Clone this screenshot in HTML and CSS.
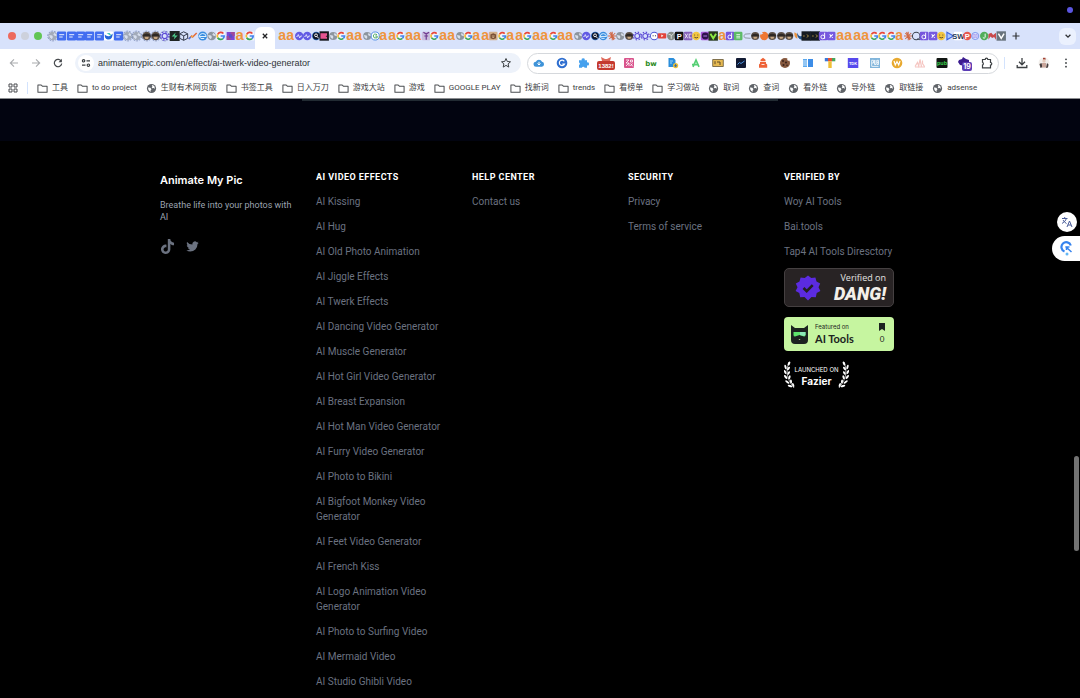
FILE: index.html
```html
<!DOCTYPE html>
<html lang="en">
<head>
<meta charset="utf-8">
<title>Animate My Pic</title>
<link rel="stylesheet" href="styles.css">
</head>
<body>
<svg class="sprite" aria-hidden="true">
  <symbol id="folder" viewBox="0 0 12 12"><path d="M1 2.200h3.600l1.200 1.300H11v6.600H1z" fill="none" stroke="#4a4d50" stroke-width="1.100" stroke-linejoin="round"/></symbol>
  <symbol id="globe" viewBox="0 0 12 12"><circle cx="6" cy="6" r="5" fill="#5f6368"/><path d="M2.200 5l2.600.3 1.200 1.500-1 1 .3 1.800Q2.500 9 2.200 5zM6.200 2.200l1 1.200-1 1.100.9 1.200 1.500-.2 1.100 1Q10 3.500 7.500 2.200z" fill="#fff"/></symbol>
  <symbol id="laurel" viewBox="0 0 11 28"><path d="M5 1Q-1 14 10 27" fill="none" stroke="#eee" stroke-width=".7"/><g fill="#fff"><ellipse cx="5" cy="2.500" rx="1.100" ry="2.100" transform="rotate(25 5 2.500)"/><ellipse cx="1.500" cy="6" rx="1" ry="2.200" transform="rotate(-15 1.500 6)"/><ellipse cx="4.500" cy="7.500" rx="1" ry="2" transform="rotate(40 4.500 7.500)"/><ellipse cx="1.200" cy="11" rx="1" ry="2.200" transform="rotate(-25 1.200 11)"/><ellipse cx="4.700" cy="12" rx="1" ry="2" transform="rotate(30 4.700 12)"/><ellipse cx="1.700" cy="16" rx="1" ry="2.300" transform="rotate(-40 1.700 16)"/><ellipse cx="5.500" cy="16.300" rx="1" ry="2" transform="rotate(15 5.500 16.300)"/><ellipse cx="3.300" cy="21" rx="1" ry="2.400" transform="rotate(-55 3.300 21)"/><ellipse cx="7" cy="20.500" rx="1" ry="2" transform="rotate(-5 7 20.500)"/><ellipse cx="6" cy="25" rx="1" ry="2.400" transform="rotate(-70 6 25)"/><ellipse cx="9.200" cy="24" rx="1" ry="2" transform="rotate(-20 9.200 24)"/></g></symbol>
</svg>
<div class="browser">
  <div class="menubar"><span class="dot"></span></div>
  <div class="tabstrip">
    <div class="lights"><i class="red"></i><i class="grey"></i><i class="green"></i></div>
    <div class="tabs tabs-left" data-tabs="globering doc doc doc doc doc bird doc globering globering monkeyring monkeyring flowerring bolt cube chart edge globe google grid amazon google"></div>
    <div class="tab-active"><button class="plain" aria-label="Close tab"><svg width="8" height="8" viewBox="0 0 8 8"><path d="M1.800 1.800l4.400 4.400M6.200 1.800L1.800 6.200" stroke="#202124" stroke-width="1.300"/></svg></button></div>
    <div class="tabs tabs-right" data-tabs="amazon amazon pulse pulse search pink globe google amazon amazon globe gring amazon amazon google amazon amazon shirt google amazon amazon globe google amazon amazon brown google amazon amazon google amazon amazon google amazon amazon globe pulse search edge burst globe monkey flower flower face tube leaf pmark xc smile dash vee amazon dee sheet cee monkey orange monkey monkey monkey swoosh dark dark dee ex amazon amazon amazon amazon google google google amazon burst oring dee ex smile play sw pred net jay em vgrey"></div>
    <button class="plain newtab" aria-label="New tab"><svg width="10" height="10" viewBox="0 0 10 10"><path d="M5 1.500v7M1.500 5h7" stroke="#303236" stroke-width="1.200"/></svg></button>
    <button class="plain tabsearch" aria-label="Search tabs"><svg width="8" height="8" viewBox="0 0 8 8"><path d="M1.600 2.800L4 5.200l2.400-2.400" fill="none" stroke="#303236" stroke-width="1.300"/></svg></button>
  </div>
  <div class="toolbar">
    <div class="nav">
      <button class="plain" aria-label="Back"><svg width="12" height="12" viewBox="0 0 12 12"><path d="M10 6H2.500M6 2.300L2.300 6 6 9.700" fill="none" stroke="#a9abae" stroke-width="1.100"/></svg></button>
      <button class="plain" aria-label="Forward"><svg width="12" height="12" viewBox="0 0 12 12"><path d="M2 6h7.500M6 2.300L9.700 6 6 9.700" fill="none" stroke="#a9abae" stroke-width="1.100"/></svg></button>
      <button class="plain" aria-label="Reload"><svg width="12" height="12" viewBox="0 0 12 12"><path d="M9.300 4.300A3.700 3.700 0 1 0 9.700 6.500" fill="none" stroke="#46494d" stroke-width="1.200"/><path d="M9.900 1.800v3.400H6.500z" fill="#46494d"/></svg></button>
    </div>
    <div class="omnibox">
      <button class="plain site" aria-label="Site information"><svg width="10" height="10" viewBox="0 0 10 10"><g fill="none" stroke="#3c4043" stroke-width="1.200"><circle cx="2.600" cy="2.800" r="1.200"/><path d="M5.500 2.800H9M1 7.200h3.500"/><circle cx="7.400" cy="7.200" r="1.200"/></g></svg></button>
      <input class="url" type="text" aria-label="Address" value="animatemypic.com/en/effect/ai-twerk-video-generator">
      <button class="plain" aria-label="Bookmark this page"><svg width="12" height="12" viewBox="0 0 12 12"><path d="M6 1.500l1.300 3 3.200.3-2.400 2.100.7 3.200L6 8.400l-2.800 1.700.7-3.200L1.500 4.800l3.200-.3z" fill="none" stroke="#3c4043" stroke-width="1"/></svg></button>
    </div>
    <div class="extensions">
      <svg viewBox="0 0 12 12"><path d="M3.200 9.800a2.500 2.500 0 0 1-.3-5A3.300 3.300 0 0 1 9 4.700a2.600 2.600 0 0 1-.1 5.100z" fill="#3f93d8"/><path d="M6 4.800v3M4.500 6.500L6 8l1.500-1.500" fill="none" stroke="#fff"/></svg>
      <svg viewBox="0 0 12 12"><circle cx="6" cy="6" r="5.300" fill="#2f6fd0"/><path d="M8.300 4.300A2.700 2.700 0 1 0 8.500 7H6.300" fill="none" stroke="#fff" stroke-width="1.200"/></svg>
      <svg viewBox="0 0 12 12"><path d="M1 3.200h2.800a1.500 1.500 0 1 1 2.800 0H9v2.300a1.500 1.500 0 1 1 0 2.800v2.500H6.600a1.400 1.400 0 0 0-2.700 0H1V8a1.400 1.400 0 0 0 0-2.600z" fill="#46a1ee"/></svg>
      <svg class="wide" viewBox="0 0 18 16"><path d="M4 2l4 2 2 0 4-2-1 4H5z" fill="#de6a5c"/><rect x="0" y="6" width="18" height="9" rx="2" fill="#c4392f"/><text x="9" y="13" text-anchor="middle" class="mini" fill="#fff">1382!</text></svg>
      <svg viewBox="0 0 12 12"><rect x="1" y="1" width="10" height="10" rx="1" fill="#d9548c"/><path d="M3 3h3L3 6h3M3 9l3-3v3M7.500 3h2v2h-2zM7.500 6.500l2.500 3M9.500 6.500L7.300 9" fill="none" stroke="#fff" stroke-width=".8"/></svg>
      <svg viewBox="0 0 12 12"><text x="6" y="8.500" text-anchor="middle" class="bw" fill="#2c8a22">bw</text></svg>
      <svg viewBox="0 0 12 12"><path d="M1.500 1h5l2 2v7h-7z" fill="#2b8edb"/><path d="M3 4h3M3 6h2" stroke="#9fd2f5"/><circle cx="8.600" cy="8.600" r="2.600" fill="#edbf39"/><path d="M8.600 7v3M7.200 8.800h2.800" stroke="#3670a7"/></svg>
      <svg viewBox="0 0 12 12"><path d="M3 9.800L6 3l3 6.800M2 7.700h5.500" fill="none" stroke="#55cf74" stroke-width="1.700"/></svg>
      <svg viewBox="0 0 12 12"><path d="M.7 2.500h10.600v7H.7z" fill="#e5b951" stroke="#635536" stroke-width=".8"/><path d="M3 4.200v3M5 5h3v3" fill="none" stroke="#5c4926"/></svg>
      <svg viewBox="0 0 12 12"><rect x="1" y="1" width="10" height="10" rx="1" fill="#111a33"/><path d="M2.500 7.500l2-2 1.500 1L9.500 4" fill="none" stroke="#4c95e0"/></svg>
      <svg viewBox="0 0 12 12"><path d="M6 .8l2.500 2v1.500H3.500V2.800zM3 5h6v1.500l1.200 1v3.300H2V7.500l1-1z" fill="#ee6237"/><path d="M4.500 7.500h3" stroke="#fff" stroke-width=".8"/></svg>
      <svg viewBox="0 0 12 12"><circle cx="6" cy="6" r="5" fill="#85583e"/><g fill="#3a221a"><circle cx="4" cy="4" r="1"/><circle cx="7" cy="5.500" r="1"/><circle cx="4.500" cy="8" r="1"/><circle cx="8" cy="8.300" r=".8"/></g><circle cx="9.500" cy="2.500" r="1.200" fill="#fff"/></svg>
      <svg viewBox="0 0 12 12"><path d="M1 2h4v8H1z" fill="#5ba9ee"/><path d="M1 4h4M1 6h4M1 8h4" stroke="#fff" stroke-width=".7"/><path d="M6 2h5v8H6z" fill="#3c8de7"/></svg>
      <svg viewBox="0 0 12 12"><path d="M.8 1h3.600v3.300H.8z" fill="#3c78d8"/><path d="M4 1h4v3.300H4z" fill="#e55337"/><path d="M8 1h3.300v3.300H8z" fill="#48a65a"/><path d="M4.300 4.300h3.400V11H4.300z" fill="#f0bf35"/></svg>
      <svg viewBox="0 0 12 12"><rect x=".8" y="1" width="10.500" height="10" fill="#5749ed"/><text x="6" y="7.800" text-anchor="middle" class="tdk" fill="#fff">TDK</text></svg>
      <svg viewBox="0 0 12 12"><rect x="1" y="1" width="10" height="10" fill="#81b5db"/><path d="M2.700 9V3.300h1.800V6H2.700M5.500 3v4.500h1.500V3M8 3.300h1.500v4.200H8zM8 5.400h1.500M2.500 9.400h7" fill="none" stroke="#fff" stroke-width=".8"/></svg>
      <svg viewBox="0 0 12 12"><circle cx="6" cy="6" r="5.300" fill="#e8a92f"/><path d="M3 4l1.300 4L6 4.500 7.700 8 9 4" fill="none" stroke="#fff" stroke-width="1.200"/></svg>
      <svg viewBox="0 0 12 12"><path d="M1 9.500l2.500-4 1.200 3.500L6 2.500l1.500 7M8.500 3.500v3l2 3M1 10h10" fill="none" stroke="#f5c6c2" stroke-width="1.200"/></svg>
      <svg viewBox="0 0 12 12"><rect x=".5" y="1" width="11" height="10" rx="1" fill="#101512"/><text x="6" y="8" text-anchor="middle" class="pub" fill="#35c447">pub</text></svg>
      <svg class="wide" viewBox="0 0 18 16"><path d="M4 5l3-1 1-2 3 2 3 1v4l-4 2-5-1-2-3z" fill="#3b1b8f"/><rect x="7" y="7" width="10" height="9" rx="2" fill="#5b3db5"/><text x="12" y="14" text-anchor="middle" class="count" fill="#fff">19</text></svg>
      <svg viewBox="0 0 12 12"><path d="M1.500 2.500h2.700a1.300 1.300 0 0 1 2.600 0h2.700v3a1.300 1.300 0 0 1 0 2.600v2.700h-8V8a1.500 1.500 0 0 0 0-2.700z" fill="none" stroke="#3c4043" stroke-width="1.200"/></svg>
    </div>
    <div class="actions">
      <button class="plain" aria-label="Downloads"><svg width="12" height="12" viewBox="0 0 12 12"><path d="M6 1v6.500M3 4.800l3 3 3-3M1.200 8v2.500h9.600V8" fill="none" stroke="#3c4043" stroke-width="1.300"/></svg></button>
      <button class="plain" aria-label="Profile"><svg width="12" height="12" viewBox="0 0 12 12"><circle cx="6" cy="6" r="5.500" fill="#f3efec"/><path d="M5 .8h2.500v2H5z" fill="#a24235"/><circle cx="6" cy="4" r="1.700" fill="#e5c8ba"/><path d="M1.500 7l2-1 1 4-2 1zM9 6l1.500 1.500-.5 3-2 .5z" fill="#463c3c"/><path d="M4 6h4v4.500H4z" fill="#c9a59a"/></svg></button>
      <button class="plain" aria-label="Menu"><svg width="12" height="12" viewBox="0 0 12 12"><g fill="#3c4043"><circle cx="6" cy="2.300" r=".9"/><circle cx="6" cy="6" r=".9"/><circle cx="6" cy="9.700" r=".9"/></g></svg></button>
    </div>
  </div>
  <div class="bookmarks">
    <svg class="apps" viewBox="0 0 10 10"><path d="M1 1h3v3H1zM6 1h3v3H6zM1 6h3v3H1zM6 6h3v3H6z" fill="none" stroke="#4a4d50"/></svg>
    <nav>
      <a href="#"><svg><use href="#folder"/></svg>工具</a>
      <a href="#"><svg><use href="#folder"/></svg>to do project</a>
      <a href="#"><svg><use href="#globe"/></svg>生财有术网页版</a>
      <a href="#"><svg><use href="#folder"/></svg>书签工具</a>
      <a href="#"><svg><use href="#folder"/></svg>日入万刀</a>
      <a href="#"><svg><use href="#folder"/></svg>游戏大站</a>
      <a href="#"><svg><use href="#folder"/></svg>游戏</a>
      <a href="#"><svg><use href="#folder"/></svg>GOOGLE PLAY</a>
      <a href="#"><svg><use href="#folder"/></svg>找新词</a>
      <a href="#"><svg><use href="#folder"/></svg>trends</a>
      <a href="#"><svg><use href="#folder"/></svg>看榜单</a>
      <a href="#"><svg><use href="#folder"/></svg>学习做站</a>
      <a href="#"><svg><use href="#globe"/></svg>取词</a>
      <a href="#"><svg><use href="#globe"/></svg>查词</a>
      <a href="#"><svg><use href="#globe"/></svg>看外链</a>
      <a href="#"><svg><use href="#globe"/></svg>导外链</a>
      <a href="#"><svg><use href="#globe"/></svg>取链接</a>
      <a href="#"><svg><use href="#globe"/></svg>adsense</a>
    </nav>
  </div>
  <div class="page">
    <div class="band"><div class="card-edge"></div></div>
    <footer class="footer">
      <section>
        <h2>Animate My Pic</h2>
        <p class="tagline">Breathe life into your photos with AI</p>
        <div class="social">
          <a href="#" aria-label="TikTok"><svg width="15" height="15" viewBox="0 0 24 24"><path fill="#6b7280" d="M12.530.02C13.840 0 15.140.01 16.440 0c.08 1.530.63 3.090 1.750 4.170 1.120 1.110 2.700 1.620 4.240 1.790v4.030c-1.440-.05-2.890-.35-4.200-.97-.57-.26-1.100-.59-1.620-.93-.01 2.920.01 5.840-.02 8.750-.08 1.400-.54 2.790-1.350 3.940-1.310 1.920-3.580 3.170-5.910 3.210-1.430.08-2.860-.31-4.080-1.030-2.020-1.190-3.440-3.370-3.650-5.710-.02-.5-.03-1-.01-1.490.18-1.900 1.120-3.720 2.580-4.960 1.660-1.440 3.980-2.130 6.150-1.720.02 1.480-.04 2.960-.04 4.440-.99-.32-2.150-.23-3.020.37-.63.41-1.110 1.040-1.360 1.750-.21.51-.15 1.070-.14 1.610.24 1.640 1.820 3.020 3.500 2.870 1.120-.01 2.190-.66 2.770-1.610.19-.33.4-.67.41-1.060.1-1.790.06-3.570.07-5.360.01-4.030-.01-8.050.02-12.070z"/></svg></a>
          <a href="#" aria-label="Twitter"><svg width="15" height="15" viewBox="0 0 24 24"><path fill="#6b7280" d="M22 5.800a8.500 8.500 0 0 1-2.360.64 4.130 4.130 0 0 0 1.810-2.270 8.210 8.210 0 0 1-2.610 1 4.100 4.100 0 0 0-7 3.740 11.640 11.640 0 0 1-8.450-4.290 4.160 4.160 0 0 0-.55 2.070 4.090 4.090 0 0 0 1.820 3.410 4.050 4.050 0 0 1-1.860-.51v.05a4.100 4.100 0 0 0 3.300 4 3.930 3.930 0 0 1-1.100.17 4.900 4.900 0 0 1-.77-.07 4.110 4.110 0 0 0 3.830 2.840A8.220 8.220 0 0 1 3 18.340a7.930 7.930 0 0 1-1-.06 11.570 11.570 0 0 0 6.290 1.850A11.590 11.590 0 0 0 20 8.450v-.53a8.430 8.430 0 0 0 2-2.120z"/></svg></a>
        </div>
      </section>
      <section>
        <h3>AI Video Effects</h3>
        <ul>
          <li><a href="#">AI Kissing</a></li>
          <li><a href="#">AI Hug</a></li>
          <li><a href="#">AI Old Photo Animation</a></li>
          <li><a href="#">AI Jiggle Effects</a></li>
          <li><a href="#">AI Twerk Effects</a></li>
          <li><a href="#">AI Dancing Video Generator</a></li>
          <li><a href="#">AI Muscle Generator</a></li>
          <li><a href="#">AI Hot Girl Video Generator</a></li>
          <li><a href="#">AI Breast Expansion</a></li>
          <li><a href="#">AI Hot Man Video Generator</a></li>
          <li><a href="#">AI Furry Video Generator</a></li>
          <li><a href="#">AI Photo to Bikini</a></li>
          <li><a href="#">AI Bigfoot Monkey Video Generator</a></li>
          <li><a href="#">AI Feet Video Generator</a></li>
          <li><a href="#">AI French Kiss</a></li>
          <li><a href="#">AI Logo Animation Video Generator</a></li>
          <li><a href="#">AI Photo to Surfing Video</a></li>
          <li><a href="#">AI Mermaid Video</a></li>
          <li><a href="#">AI Studio Ghibli Video</a></li>
        </ul>
      </section>
      <section>
        <h3>Help Center</h3>
        <ul><li><a href="#">Contact us</a></li></ul>
      </section>
      <section>
        <h3>Security</h3>
        <ul>
          <li><a href="#">Privacy</a></li>
          <li><a href="#">Terms of service</a></li>
        </ul>
      </section>
      <section>
        <h3>Verified By</h3>
        <ul>
          <li><a href="#">Woy AI Tools</a></li>
          <li><a href="#">Bai.tools</a></li>
          <li><a href="#">Tap4 AI Tools Diresctory</a></li>
        </ul>
        <div class="badges">
          <a class="badge dang" href="#">
            <svg width="26" height="26" viewBox="0 0 26 26"><path d="M13 .5l3.300 2.600 4.100-.7 1.100 4 3.700 2-1.700 3.900 1.900 3.800-3.700 2-.9 4.200-4.300-.3L13 25.500l-3.500-3.500-4.300.3-.9-4.200-3.700-2 1.900-3.800L.8 8.400l3.700-2 1.100-4 4.100.7z" fill="#5b2be0"/><path d="M8.500 13l3.200 3.200 6-6" fill="none" stroke="#231f20" stroke-width="2.600"/></svg>
            <span class="dang-text"><span>Verified on</span><strong>DANG!</strong></span>
          </a>
          <a class="badge tools" href="#">
            <svg width="17" height="19" viewBox="0 0 17 19"><path d="M0 0l4 3h9l4-3v15q0 4-4 4H4q-4 0-4-4z" fill="#1c2320"/><path d="M2.500 7h12v3q0 1.500-1.500 1.500L8.500 10 4 11.500q-1.500 0-1.500-1.500z" fill="#5ee66c"/><path d="M9 7h5.500v3L13 11 9 10z" fill="#8ceab8"/><path d="M7.500 14h2l-1 1z" fill="#c6f5a0"/></svg>
            <span class="tools-text"><small>Featured on</small><strong>AI Tools</strong></span>
            <span class="votes"><svg width="6" height="8" viewBox="0 0 6 8"><path d="M0 0h6v8L3 6 0 8z" fill="#1c2320"/></svg><span>0</span></span>
          </a>
          <a class="badge fazier" href="#">
            <svg width="11" height="28"><use href="#laurel"/></svg>
            <span class="fazier-text"><small>LAUNCHED ON</small><strong>Fazier</strong></span>
            <svg class="mirror" width="11" height="28"><use href="#laurel"/></svg>
          </a>
        </div>
      </section>
    </footer>
    <div class="floating">
      <button class="plain translate" aria-label="Translate"><svg width="12" height="12" viewBox="0 0 12 12"><g fill="none" stroke="#4a5d99" stroke-width="1"><path d="M1 2.500h5.500M3.700 1v1.500M5.500 2.500Q4.500 5.500 1 7.500M2 4q1.500 2.500 3.500 3.500"/><path d="M6 11l2.500-6L11 11M7 9h3"/></g></svg></button>
      <button class="plain assistant" aria-label="Assistant"><svg width="13" height="15" viewBox="0 0 13 15"><path d="M10.800 4.500A4.800 4.800 0 1 0 4.500 10.500" fill="none" stroke="#3583ee" stroke-width="2.200"/><path d="M5.500 5.500l6 5.500M6.500 9V6h3" fill="none" stroke="#3583ee" stroke-width="1.500"/><circle cx="7" cy="13" r="1.500" fill="#63b7f5"/></svg></button>
    </div>
    <div class="scroll-thumb"></div>
  </div>
</div>
<script src="tabs.js"></script>
</body>
</html>
```
FILE: styles.css
```css
* { box-sizing: border-box; }
body { margin: 0; background: #000; font-family: Roboto, "Noto Sans CJK SC", sans-serif; font-size: 10px; line-height: 15px; }
a { color: inherit; text-decoration: none; }
h2, h3, p, ul { margin: 0; padding: 0; }
ul { list-style: none; }
svg { display: block; flex: none; }
.sprite { position: absolute; width: 0; height: 0; }
.plain { display: flex; align-items: center; justify-content: center; padding: 0; border: 0; background: none; }
.browser { display: flex; flex-direction: column; height: 100vh; overflow: hidden; }

.menubar { display: flex; justify-content: flex-end; flex: none; height: 23px; padding: 7px 7px 0 0; }
.dot { width: 6px; height: 6px; border-radius: 50%; background: #5b55e0; }

.tabstrip { display: flex; flex: none; height: 26px; align-items: center; padding: 0 4px 0 8px; background: #d8e2fb; }
.lights { display: flex; gap: 5px; width: 40px; flex: none; }
.lights i { width: 8px; height: 8px; border-radius: 50%; }
.lights .red { background: #ed6a5e; }
.lights .grey { background: #cdd1dc; }
.lights .green { background: #61c554; }
.tabs { display: flex; min-width: 0; }
.tabs svg { flex: 1; min-width: 0; height: 10px; overflow: visible; }
.tabs-left { flex: 206; }
.tabs-right { flex: 727; }
.tab-active { align-self: flex-end; flex: none; width: 20px; height: 22px; margin: 0 3px 0 1px; padding-bottom: 4px; display: flex; align-items: center; justify-content: center; border-radius: 6px 6px 0 0; background: #fff; }
.newtab { width: 12px; margin-left: 5px; flex: none; }
.tabsearch { width: 17px; height: 17px; margin-left: 37px; border-radius: 6px; background: #ebf1fe; flex: none; }

.toolbar { display: flex; flex: none; height: 28px; align-items: center; padding: 0 8px; background: #fff; }
.nav { display: flex; gap: 10px; width: 67px; flex: none; }
.omnibox { display: flex; align-items: center; flex: 434; height: 20px; padding: 0 9px 0 3px; border-radius: 10px; background: #edf2fa; }
.site { width: 16px; height: 16px; border-radius: 50%; background: #fff; }
.url { flex: 1; min-width: 0; margin-left: 4px; padding: 0; border: 0; outline: 0; background: none; color: #2f3236; font: 9px/14px "Liberation Sans", sans-serif; }
.extensions { display: grid; grid-template-columns: repeat(21, 1fr); flex: 470; height: 21px; margin-left: 6px; align-items: center; justify-items: center; border: 1px solid #d5d8dc; border-radius: 11px; }
.extensions svg { width: 12px; height: 12px; }
.extensions .wide { width: 18px; height: 16px; }
.mini { font: bold 6px "Liberation Sans", sans-serif; }
.tdk { font: bold 4px "Liberation Sans", sans-serif; }
.bw { font: bold 7px "DejaVu Sans", sans-serif; }
.pub { font: bold 6px Roboto, sans-serif; }
.count { font: bold 7px Inter, sans-serif; }
.actions { display: flex; gap: 10px; flex: none; margin-left: 5px; padding-left: 11px; border-left: 1px solid #d3e3fd; }

.bookmarks { display: flex; flex: none; height: 22px; align-items: center; padding: 1px 0 0 8px; border-bottom: 1px solid #8b8d90; background: #fff; color: #3c4043; font-size: 8px; line-height: 12px; }
.apps { width: 10px; height: 10px; }
.bookmarks nav { display: flex; gap: 9px; margin-left: 9px; padding-left: 9px; border-left: 1px solid #d3e3fd; white-space: nowrap; }
.bookmarks a { display: flex; gap: 4px; align-items: center; }
.bookmarks a svg { width: 11px; height: 11px; }

.page { flex: 1; min-height: 0; overflow: hidden; background: #000; }
.band { height: 42px; background: #020410; }
.card-edge { width: 44%; height: 2px; margin: 0 auto; background: #222b33; }
.footer { display: grid; grid-template-columns: repeat(5, 1fr); gap: 20px; max-width: 760px; margin: 0 auto; padding-top: 29px; color: #6b7280; }
h2 { color: #fff; font: 600 11px/20px Inter, sans-serif; }
.tagline { margin-top: 9px; color: #9ca3af; font-size: 9px; line-height: 12px; }
.social { display: flex; gap: 10px; margin-top: 16px; }
h3 { margin-bottom: 9px; color: #fff; font-size: 9px; font-weight: 700; line-height: 15px; letter-spacing: .05em; text-transform: uppercase; }
.footer ul { display: grid; gap: 10px; }
.badges { display: flex; flex-direction: column; align-items: flex-start; gap: 10px; margin-top: 9px; }
.badge { display: flex; align-items: center; }
.dang { width: 110px; height: 39px; padding: 0 7px 0 10px; justify-content: space-between; border: 1px solid #454041; border-radius: 5px; background: #282324; color: #e5e3e3; }
.dang-text { display: flex; flex-direction: column; align-items: flex-end; font: 9px/12px "Open Sans", sans-serif; }
.dang-text strong { color: #f3efe9; font: italic 900 18px/20px Roboto, sans-serif; }
.tools { width: 110px; height: 34px; padding: 0 9px 0 7px; gap: 7px; border-radius: 4px; background: #c6f5a0; color: #1c2320; }
.tools-text { display: flex; flex-direction: column; flex: 1; }
.tools-text small { font: 6px/8px Inter, sans-serif; }
.tools-text strong { font: bold 11px/15px Lato, sans-serif; }
.votes { display: flex; flex-direction: column; align-items: center; gap: 2px; font: 8px/12px Lato, sans-serif; }
.fazier { width: 65px; height: 28px; justify-content: space-between; color: #fff; }
.fazier-text { display: flex; flex-direction: column; align-items: center; width: 43px; padding-top: 3px; white-space: nowrap; }
.fazier-text small { font: 6px/8px Inter, sans-serif; }
.fazier-text strong { font: bold 10px/14px Inter, sans-serif; }
.mirror { transform: scaleX(-1); }

.floating { position: fixed; right: 0; top: 212px; display: flex; flex-direction: column; align-items: flex-end; gap: 4px; }
.translate { width: 20px; height: 20px; margin-right: 3px; border-radius: 50%; background: #fff; }
.assistant { width: 28px; height: 25px; border-radius: 13px 0 0 13px; background: #fff; }
.scroll-thumb { position: fixed; right: 1px; top: 456px; width: 5px; height: 95px; border-radius: 3px; background: #737373; }
.fav-letter { font: bold 15px "Liberation Sans", sans-serif; text-anchor: middle; }
.fav-small { font: bold 8px "Liberation Sans", sans-serif; text-anchor: middle; }
```
FILE: tabs.js
```js
// Favicon drawings on a 10 x 10 grid, keyed by the names used in data-tabs.
const ring = '<circle cx="5" cy="5" r="4.900" fill="none" stroke="#5a6da0" stroke-width=".6" stroke-dasharray="2 1"/>';
const globe = '<circle cx="5" cy="5" r="4.300" fill="#8d959f"/><path d="M1.500 4l3 .5.700 1.500-1 2.300-2-1.800zM5.500 1.300l1 1.500-1 1 1.500 1 2 .4-.5-2z" fill="#d8dfeb"/>';
const monkey = '<circle cx="5" cy="5" r="4.300" fill="#5d5148"/><path d="M1 4q4-3 8 0v1.500H1z" fill="#2e2825"/><path d="M2.800 5.800h4.400L6.300 8H3.700z" fill="#c9a883"/>';
const flower = '<g fill="none" stroke="#5c4bd4" stroke-width="1.200"><circle cx="5" cy="5" r="2.600"/><circle cx="5" cy="5" r="4.200" stroke-dasharray="1.600 1.700"/></g>';
const box = (c) => `<rect x=".3" y=".5" width="9.200" height="9" rx="1.300" fill="${c}"/>`;
const disc = (c) => `<circle cx="5" cy="5" r="4.500" fill="${c}"/>`;
const letter = (t, c) => `<text x="5" y="8.200" class="fav-small" fill="${c}">${t}</text>`;
const google = '<g fill="none" stroke-width="1.700"><path d="M7.700 2.500A3.500 3.500 0 0 0 2 3.300" stroke="#e8463a"/><path d="M2 3.300A3.500 3.500 0 0 0 2 6.700" stroke="#f5bb2d"/><path d="M2 6.700A3.500 3.500 0 0 0 7.300 7.600" stroke="#3aa757"/><path d="M7.300 7.600A3.500 3.500 0 0 0 8.500 5H5" stroke="#4383ee"/></g>';

const icons = {
  globe, monkey, flower,
  google: '<path d="M.5 .5h9v9h-9z" fill="#f1f4fb"/>' + google,
  globering: ring + '<g opacity=".7">' + globe + '</g>',
  monkeyring: ring + monkey,
  flowerring: ring + flower,
  doc: box('#426df0') + '<path d="M2.500 3.700h5M2.500 6h3.500" stroke="#fff" stroke-width=".9"/>',
  bird: box('#fff') + '<path d="M1 3.500q4 4 8-1Q9 9 4 8.500 1 8 1 3.500z" fill="#2666d8"/><path d="M3 2h3q2 2 1 3z" fill="#45c8b7"/>',
  bolt: '<path d="M0 0h10v10H0z" fill="#1e2424"/><path d="M6 1.500L2 5.500h3L4 8.500l4-4H5z" fill="#4ed190"/>',
  cube: '<path d="M5 .8l4 2v4.500L5 9.300l-4-2V2.800zM1 2.800l4 2 4-2M5 4.800v4.500" fill="none" stroke="#343b4d"/>',
  chart: '<path d="M1 8l3-3 1 1 4-4" fill="none" stroke="#e56a3a" stroke-width="1.500"/><path d="M1 8l2-2" stroke="#4778dd" stroke-width="1.500"/><path d="M4 5l1 1" stroke="#efb83c" stroke-width="1.500"/>',
  edge: disc('#398de0') + '<path d="M1.500 5.500h7q0-3-3.500-3-3 0-3.500 3 1 3 5 2" fill="none" stroke="#dff1ff"/>',
  grid: '<path d="M1 1h8v8H1z" fill="#7b48d4"/><path d="M5 1h4v4H5zM1 5h4v4H1z" fill="#a0499a"/><path d="M3.300 3.300h3.400v3.400H3.300z" fill="#5d4cc6"/>',
  amazon: '<text x="5" y="9.200" class="fav-letter" fill="#ef943c">a</text>',
  pulse: disc('#625be4') + '<path d="M2 5.500h1l1-2 1.500 3.500 1-2H8" fill="none" stroke="#fff" stroke-width=".8"/>',
  search: disc('#2864b5') + '<circle cx="5" cy="5" r="3.600" fill="#101728"/><circle cx="4.800" cy="4.300" r="1.500" fill="none" stroke="#fff"/><path d="M6 5.500l1.500 2" stroke="#fff"/>',
  pink: '<path d="M0 0h10v10H0z" fill="#17181d"/><path d="M1 2.200h7v2.200L6.500 5.200 8 6v2H1z" fill="#e65591"/>',
  gring: '<circle cx="5" cy="5" r="4.300" fill="#fff" stroke="#2a76dd" stroke-width=".8"/><path d="M7 3.500Q3 2 3 5t4 2V5H5" fill="none" stroke="#46a35d"/>',
  shirt: box('#c8bddd') + '<path d="M2 1l3 2 3-2M5 3v6M3 5h4" stroke="#6f3a92" fill="none" stroke-width="1.300"/>',
  brown: box('#d3b18b') + '<path d="M2 3.500l3-1.500 3 1.500v4L5 8.500l-3-1z" fill="#7a5136"/><path d="M3.500 5h3M4 6.500h2" stroke="#e9c99d" stroke-width=".8"/>',
  burst: '<path d="M5 .5v9M.5 5h9M1.800 1.800l6.400 6.400M8.200 1.800L1.800 8.200M3.200.8l3.600 8.400" stroke="#d06a49" stroke-width="1.100"/>',
  face: disc('#4b57d5') + '<circle cx="5" cy="5" r="3.500" fill="#fff"/><path d="M3.300 4.800h1M5.800 4.800h1" stroke="#15171f"/>',
  tube: '<rect x=".3" y="2" width="9" height="5.600" rx="1" fill="#e2423a"/><path d="M4 3.400v2.800l2.300-1.400z" fill="#fff"/>',
  leaf: disc('#858c89') + '<path d="M2 3l3 1v4M8 2L5 5" stroke="#d9ded7" fill="none"/>',
  pmark: box('#111') + letter('P', '#fff'),
  xc: box('#8561bb') + '<path d="M1.500 2.500l3 5M4.500 2.500l-3 5M8.500 3H6v4h2.500" stroke="#fff" fill="none" stroke-width=".8"/>',
  smile: disc('#f3c642') + '<path d="M3.300 3.500v1M6.700 3.500v1M3 6.300q2 1.500 4 0" stroke="#584826" fill="none"/>',
  dash: box('#a758d8') + '<circle cx="5" cy="5" r="3.700" fill="#30134e"/><path d="M3 5h4" stroke="#bd83ed"/>',
  vee: '<path d="M0 0h10v10H0z" fill="#26381f"/><path d="M2 2.500l3 5 3-5" stroke="#8bea43" stroke-width="2" fill="none"/>',
  dee: box('#7655dc') + '<circle cx="4.500" cy="6" r="2" fill="none" stroke="#fff"/><path d="M6.500 1.500V8" stroke="#fff"/>',
  sheet: box('#5cbb66') + '<path d="M3 3.500h4M3 5.300h4M3 7h4" stroke="#fff" stroke-width=".8"/>',
  cee: '<path d="M8.500 2.500L3 3q-3 2 0 4l5.500.5" stroke="#9da7b5" fill="none" stroke-width="1.200"/>',
  orange: disc('#ee7734') + '<path d="M1 0l3 2-3 2z" fill="#d8e2fb"/>',
  swoosh: '<path d="M1 1l3 2v5q-4-2-3-7z" fill="#e99342"/><path d="M4 1q1 5 5 4v4Q3 8 4 1z" fill="#24548c"/>',
  dark: '<path d="M0 0h10v10H0z" fill="#151a22"/><path d="M1.500 5h2M5.500 3.500l2 1.500-2 1.500" stroke="#c7a34d" stroke-width=".8" fill="none"/>',
  ex: box('#765ae0') + '<path d="M3.300 3.300l3.400 3.400M6.700 3.300L3.300 6.700" stroke="#fff" stroke-width="1.100"/>',
  oring: '<circle cx="5" cy="5" r="4" fill="none" stroke="#3c4350" stroke-width="1.100"/><path d="M6 8l3 1" stroke="#3c4350"/>',
  play: '<path d="M1.500 1l7 4-7 4z" fill="#aac8ff" stroke="#3d65df" stroke-width="1.200"/>',
  sw: box('#fff') + '<text x="5" y="7.800" class="fav-small" fill="#273b59">SW</text>',
  pred: disc('#e7594f') + letter('P', '#fff'),
  net: '<circle cx="5" cy="5" r="3.800" fill="none" stroke="#7892ee"/><path d="M1.500 5h7M2.500 3q2.500 1.500 5 0M2.500 7q2.500-1.500 5 0" stroke="#b1a1ef" fill="none"/>',
  jay: disc('#50ad5a') + '<path d="M6 2.500v4q-1 2-2.500 0" stroke="#fff" fill="none"/>',
  em: '<path d="M1 9V3l3-1.500L6 4l3-2.500V9L7 6 5 7 3 5.500z" fill="#c94a4d"/>',
  vgrey: '<path d="M0 0h10v10H0z" fill="#68737d"/><path d="M2 2.500l3 5 3-5" stroke="#fff" stroke-width="1.600" fill="none"/>'
};

document.querySelectorAll('[data-tabs]').forEach((strip) => {
  strip.innerHTML = strip.dataset.tabs.split(' ')
    .map((name) => `<svg viewBox="0.500 0 9 10" aria-hidden="true">${icons[name]}</svg>`)
    .join('');
});
```
